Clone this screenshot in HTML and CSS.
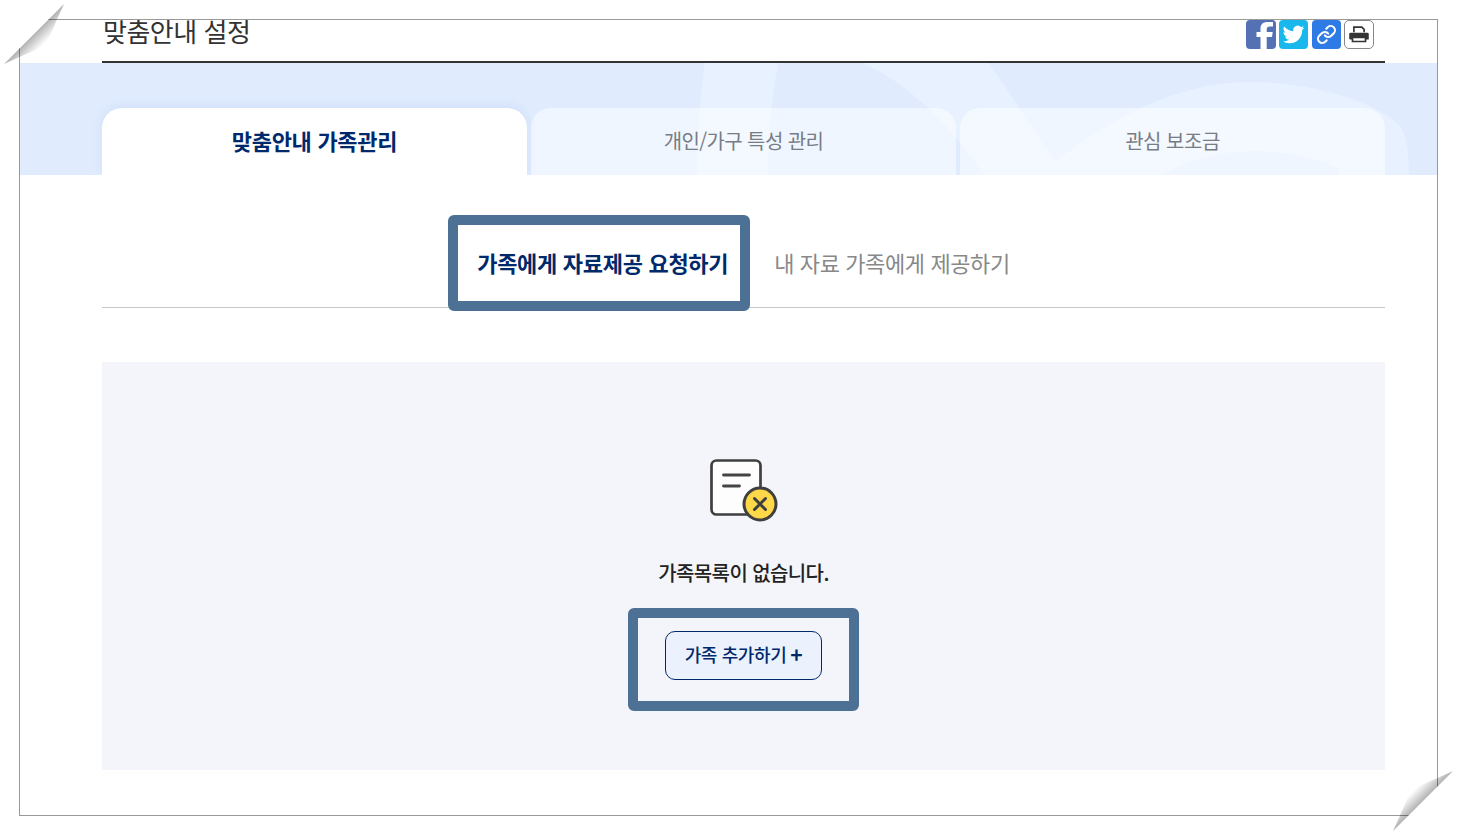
FILE: index.html
```html
<!DOCTYPE html>
<html lang="ko">
<head>
    <meta charset="UTF-8">
    <meta name="viewport" content="width=device-width, initial-scale=1.0">
    <title>맞춤안내 설정</title>
    <link rel="stylesheet" href="styles.css">
</head>
<body>
    <div class="frame">
        <div class="page-head">
            <h1>맞춤안내 설정</h1>
            <div class="share">
                <a class="share-btn fb" href="#">
                    <svg viewBox="0 0 30 29"><path d="M12.500 29V17H8.500v-5h4V8.500C12.500 4 15.500 2 19.500 2h5.500v4.500h-3.300c-2 0-3 1-3 3V12h6l-.7 5h-5.300v12z" fill="#fff" transform="translate(2 0)"/></svg>
                </a>
                <a class="share-btn tw" href="#">
                    <svg viewBox="-4 -4 32 32"><path d="M23.953 4.570a10 10 0 01-2.825.775 4.958 4.958 0 002.163-2.723c-.951.555-2.005.959-3.127 1.184a4.920 4.920 0 00-8.384 4.482C7.690 8.095 4.067 6.130 1.640 3.162a4.822 4.822 0 00-.666 2.475c0 1.710.870 3.213 2.188 4.096a4.904 4.904 0 01-2.228-.616v.060a4.923 4.923 0 003.946 4.827 4.996 4.996 0 01-2.212.085 4.936 4.936 0 004.604 3.417 9.867 9.867 0 01-6.102 2.105c-.390 0-.779-.023-1.170-.067a13.995 13.995 0 007.557 2.209c9.053 0 13.998-7.496 13.998-13.985 0-.210 0-.420-.015-.630A9.935 9.935 0 0024 4.590z" fill="#fff"/></svg>
                </a>
                <a class="share-btn ln" href="#">
                    <svg viewBox="-5 -5 34 34" fill="none" stroke="#fff" stroke-width="2.400" stroke-linecap="round"><path d="M10 13a5 5 0 0 0 7.540.540l3-3a5 5 0 0 0-7.070-7.070l-1.720 1.710"/><path d="M14 11a5 5 0 0 0-7.540-.540l-3 3a5 5 0 0 0 7.070 7.070l1.710-1.710"/></svg>
                </a>
                <a class="share-btn pr" href="#">
                    <svg viewBox="0 0 30 29"><path d="M9.500 12V6.500h8.500l2.500 2.500v3" fill="none" stroke="#333" stroke-width="1.800"/><path d="M6 12.500h18a1.500 1.500 0 0 1 1.500 1.500v6H6a1.500 1.500 0 0 1-1.500-1.500V14A1.500 1.500 0 0 1 6 12.500z" fill="#333"/><path d="M8 17.500h14v4.500H8z" fill="#fff" stroke="#333" stroke-width="1.800"/></svg>
                </a>
            </div>
        </div>

        <div class="hero">
            <svg class="hero-bg" viewBox="20 63 1417 112" preserveAspectRatio="none">
                <path d="M705 63C699 100 697 140 697 175H768C768 140 771 100 778 63Z" fill="#e8f1ff"/>
                <path d="M863 63C905 82 945 118 984 175H1040L1055 162C1030 125 1010 92 988 63Z" fill="#e8f1ff"/>
                <path d="M1020 175L1055 162C1110 118 1180 82 1250 82C1310 82 1370 100 1397 123C1406 132 1409 150 1409 175Z" fill="#e8f1ff"/>
                <path d="M1160 175C1190 160 1220 151 1253 151C1285 151 1315 158 1338 168L1339 175Z" fill="#e0ecfe"/>
            </svg>
            <div class="tabs">
                <a class="tab active" href="#">맞춤안내 가족관리</a>
                <a class="tab tab-long" href="#">개인/가구 특성 관리</a>
                <a class="tab" href="#">관심 보조금</a>
            </div>
        </div>

        <div class="content">
            <div class="subtabs">
                <a class="subtab active" href="#">가족에게 자료제공 요청하기<span class="mark mark-tab"></span></a>
                <a class="subtab" href="#">내 자료 가족에게 제공하기</a>
            </div>

            <div class="empty">
                <svg class="empty-icon" viewBox="0 0 70 66">
                    <rect x="2.500" y="2.500" width="49" height="54" rx="5" fill="#fdfdfd" stroke="#3f3f3f" stroke-width="2.700"/>
                    <path d="M14.500 17h26M14.500 28h16" stroke="#444" stroke-width="2.800" stroke-linecap="round"/>
                    <circle cx="51" cy="46" r="16" fill="#ffd84a" stroke="#3f3f3f" stroke-width="3"/>
                    <path d="M45.500 40.500l11 11M56.500 40.500l-11 11" stroke="#3f3f3f" stroke-width="3" stroke-linecap="round"/>
                </svg>
                <p class="empty-text">가족목록이 없습니다.</p>
                <a class="add-btn" href="#">가족 추가하기<span class="plus">+</span><span class="mark mark-btn"></span></a>
            </div>
        </div>
    </div>

    <svg class="fold fold-tl" viewBox="0 0 70 70">
        <defs>
            <linearGradient id="shade-tl" x1="34" y1="34" x2="44" y2="44" gradientUnits="userSpaceOnUse">
                <stop offset="0" stop-color="#000" stop-opacity=".3"/>
                <stop offset="1" stop-color="#000" stop-opacity="0"/>
            </linearGradient>
        </defs>
        <path d="M0 0H68L0 68Z" fill="#fff"/>
        <path d="M64 4L4 64Q30 52 46 46Q52 30 64 4Z" fill="url(#shade-tl)"/>
    </svg>
    <svg class="fold fold-br" viewBox="0 0 70 70">
        <defs>
            <linearGradient id="shade-br" x1="36" y1="36" x2="26" y2="26" gradientUnits="userSpaceOnUse">
                <stop offset="0" stop-color="#000" stop-opacity=".3"/>
                <stop offset="1" stop-color="#000" stop-opacity="0"/>
            </linearGradient>
        </defs>
        <path d="M70 70H2L70 2Z" fill="#fff"/>
        <path d="M6 66L66 6Q40 18 24 24Q18 40 6 66Z" fill="url(#shade-br)"/>
    </svg>
</body>
</html>
```

FILE: styles.css
```css
* {
    box-sizing: border-box;
}
html, body {
    margin: 0;
    height: 835px;
    overflow: hidden;
}
body {
    position: relative;
    background: #fff;
    font-family: "Noto Sans CJK KR", "Noto Sans", sans-serif;
    color: #222;
}
a {
    text-decoration: none;
    color: inherit;
}
.frame {
    margin: 19px;
    height: 797px;
    border: 1px solid #999;
    overflow: hidden;
}
.page-head {
    display: flex;
    justify-content: space-between;
    align-items: flex-start;
    height: 43px;
    margin: 0 52px 0 82px;
    border-bottom: 2px solid #333;
}
.page-head h1 {
    margin: -11px 0 0 1px;
    font-size: 26px;
    line-height: 44px;
    font-weight: 400;
    letter-spacing: -0.5px;
    color: #333;
}
.share {
    display: flex;
    gap: 3px;
    margin-right: 11px;
}
.share-btn {
    display: block;
    width: 29px;
    height: 29px;
    border-radius: 4px;
    overflow: hidden;
}
.share-btn svg {
    display: block;
    width: 100%;
    height: 100%;
}
.fb {
    width: 30px;
    background: #5472b3;
}
.tw { background: #19b8ec; }
.ln {
    margin-left: 1px;
    background: #2f7be6;
}
.pr {
    width: 30px;
    background: #fff;
    border: 1px solid #888;
    border-radius: 5px;
}
.hero {
    position: relative;
    height: 112px;
    padding: 45px 52px 0 82px;
    overflow: hidden;
    background: #e0ecfe;
}
.hero-bg {
    position: absolute;
    left: 0;
    top: 0;
    width: 100%;
    height: 100%;
}
.tabs {
    position: relative;
    display: flex;
    gap: 4px;
    height: 67px;
}
.tab {
    flex: 1;
    display: flex;
    align-items: center;
    justify-content: center;
    padding-bottom: 2px;
    border-radius: 20px 20px 0 0;
    background: rgba(255, 255, 255, 0.5);
    font-size: 20px;
    letter-spacing: -0.5px;
    color: #777c85;
}
.tab-long {
    letter-spacing: -0.6px;
}
.tab.active {
    padding-bottom: 4px;
    background: #fff;
    font-size: 22px;
    font-weight: 700;
    letter-spacing: -0.3px;
    color: #00296b;
    box-shadow: 0 -2px 12px rgba(70, 110, 190, 0.1);
}
.content {
    padding: 45px 52px 0 82px;
}
.subtabs {
    display: flex;
    justify-content: center;
    height: 88px;
    border-bottom: 1px solid #c8c8c8;
}
.subtab {
    position: relative;
    display: flex;
    align-items: center;
    padding: 0 23px 3px;
    font-size: 22px;
    letter-spacing: -0.4px;
    color: #888;
}
.subtab.active {
    font-weight: 700;
    letter-spacing: -0.3px;
    color: #00296b;
}
.mark {
    position: absolute;
    border: 10px solid #4d7194;
    border-radius: 6px;
}
.mark-tab {
    left: -6px;
    right: 1px;
    top: -5px;
    bottom: -4px;
}
.mark-btn {
    left: -38px;
    right: -38px;
    top: -24px;
    bottom: -32px;
}
.empty {
    display: flex;
    flex-direction: column;
    align-items: center;
    height: 408px;
    margin-top: 54px;
    padding-top: 96px;
    background: #f3f5fa;
}
.empty-icon {
    display: block;
    width: 70px;
    height: 66px;
}
.empty-text {
    margin: 34px 0 0;
    font-size: 20px;
    line-height: 30px;
    letter-spacing: -0.6px;
    font-weight: 500;
}
.add-btn {
    position: relative;
    display: flex;
    align-items: center;
    justify-content: center;
    gap: 4px;
    width: 157px;
    height: 49px;
    margin-top: 43px;
    padding-bottom: 4px;
    border: 1px solid #00296b;
    border-radius: 10px;
    background: #ecf2fd;
    font-size: 18px;
    font-weight: 500;
    letter-spacing: -0.4px;
    color: #00296b;
}
.plus {
    font-size: 21px;
    line-height: 24px;
    font-weight: 700;
}
.fold {
    position: absolute;
    width: 70px;
    height: 70px;
}
.fold-tl {
    left: 0;
    top: 0;
}
.fold-br {
    left: 1387px;
    top: 765px;
}
```
